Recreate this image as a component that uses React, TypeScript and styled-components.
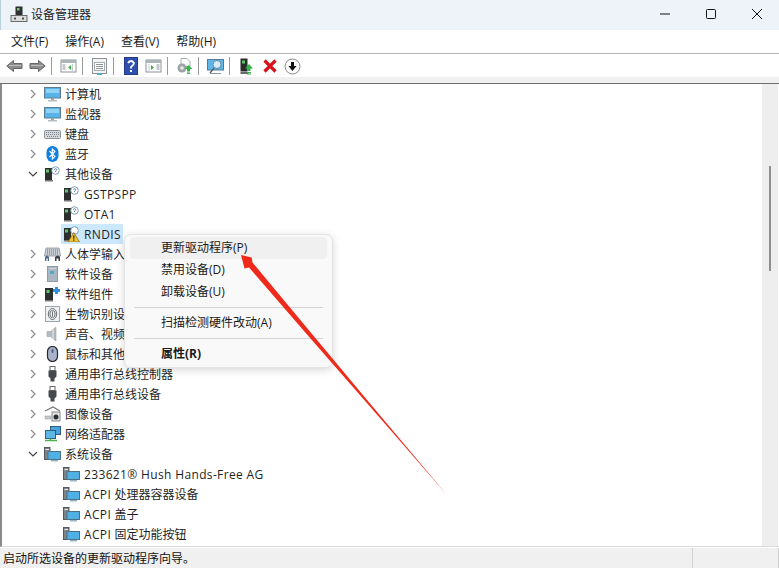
import styled, { createGlobalStyle } from 'styled-components';

const GlobalStyle = createGlobalStyle`
  html, body {
    margin: 0;
    padding: 0;
    background: #fff;
  }
  body {
    font-family: "Open Sans", "Noto Sans CJK SC", sans-serif;
    font-size: 12px;
    color: #1a1a1a;
  }
`;

type IconKind =
  | 'monitor' | 'keyboard' | 'bluetooth' | 'unknown' | 'warn' | 'hid' | 'box'
  | 'component' | 'finger' | 'speaker' | 'mouse' | 'usb' | 'camera' | 'network' | 'system';

function TreeIcon({ kind }: { kind: IconKind }) {
  switch (kind) {
    case 'monitor':
      return (
        <svg width="17" height="16" viewBox="0 0 17 16">
          <rect x="0.5" y="1.5" width="16" height="10.5" fill="#58b4e8" stroke="#5a7d96" />
          <rect x="2" y="3" width="13" height="4" fill="#8ed2f5" />
          <rect x="7" y="12" width="3" height="2" fill="#9aa5ad" />
          <rect x="4" y="14" width="9" height="1.5" fill="#b5bdc3" />
        </svg>
      );
    case 'keyboard':
      return (
        <svg width="17" height="16" viewBox="0 0 17 16">
          <rect x="0.5" y="4.5" width="16" height="8" rx="1" fill="#d4d8dc" stroke="#8b9299" />
          <path d="M2 6.5h13M2 8.5h13M3 10.5h11" stroke="#7f868d" strokeWidth="1" strokeDasharray="1 1" />
        </svg>
      );
    case 'bluetooth':
      return (
        <svg width="17" height="16" viewBox="0 0 17 16">
          <rect x="2.5" y="0" width="12" height="16" rx="6" fill="#0f7fe0" />
          <path d="M5.5 5 L11 10.5 L8.3 13 V3 L11 5.5 L5.5 11" fill="none" stroke="#fff" strokeWidth="1.1" />
        </svg>
      );
    case 'unknown':
      return (
        <svg width="17" height="16" viewBox="0 0 17 16">
          <rect x="1" y="2" width="7" height="12" fill="#2c2f2e" />
          <rect x="2" y="3.5" width="3" height="3" fill="#5fc66a" />
          <rect x="1" y="14" width="8" height="1.5" fill="#777" />
          <circle cx="11.5" cy="4.5" r="3.8" fill="#fff" stroke="#7d9db5" />
          <path d="M10.2 3.5 Q11.5 1.9 12.8 3.5 Q12.6 4.5 11.5 5.2 V6" fill="none" stroke="#5a7f9c" strokeWidth="1" />
        </svg>
      );
    case 'warn':
      return (
        <svg width="17" height="16" viewBox="0 0 17 16">
          <rect x="1" y="2" width="7" height="12" fill="#2c2f2e" />
          <rect x="2" y="3.5" width="3" height="3" fill="#5fc66a" />
          <rect x="1" y="14" width="8" height="1.5" fill="#777" />
          <circle cx="11.5" cy="4.5" r="3.8" fill="#fff" stroke="#7d9db5" />
          <path d="M10.8 6.5 L16.5 16 H5 Z" fill="#f4c430" stroke="#8a6a12" strokeWidth="0.8" />
          <path d="M10.8 9.5v3.2M10.8 13.6v1.2" stroke="#222" strokeWidth="1.2" />
        </svg>
      );
    case 'hid':
      return (
        <svg width="17" height="16" viewBox="0 0 17 16">
          <path d="M2 2h13l1.5 8H.5z" fill="#c9cfd5" stroke="#7b828a" strokeWidth="0.7" />
          <path d="M3 4h11M3 6h11M3 8h11" stroke="#6d757d" strokeDasharray="1 1" />
          <path d="M1 15 V11 Q3 8 5 11 V15 H3.7 V12.5 H2.3 V15 Z" fill="#4a6a92" />
          <path d="M11 15 V11 Q14 8 16 11 V15 H14.5 V12.5 H12.5 V15 Z" fill="#3a3f46" />
        </svg>
      );
    case 'box':
      return (
        <svg width="17" height="16" viewBox="0 0 17 16">
          <rect x="3.5" y="0.5" width="10" height="15" fill="#a9b7c0" stroke="#8d9aa3" />
          <rect x="6" y="5" width="4" height="3" fill="#53a7c8" />
          <rect x="5" y="2" width="7" height="1" fill="#cfd7dc" />
        </svg>
      );
    case 'component':
      return (
        <svg width="17" height="16" viewBox="0 0 17 16">
          <rect x="1" y="2" width="8" height="12" fill="#2b2f2e" />
          <rect x="2.5" y="4" width="3" height="3" fill="#5fc66a" />
          <rect x="1" y="14" width="8" height="1.5" fill="#777" />
          <path d="M11 1h3v2h2v3h-2v2h-3V6H9V3h2z" fill="#2f8fe0" />
        </svg>
      );
    case 'finger':
      return (
        <svg width="17" height="16" viewBox="0 0 17 16">
          <rect x="1.5" y="0.5" width="14" height="15" fill="#eef2f4" stroke="#9aa6ae" />
          <ellipse cx="8.5" cy="8" rx="4.2" ry="5.5" fill="none" stroke="#6d7276" />
          <ellipse cx="8.5" cy="8" rx="2.6" ry="3.7" fill="none" stroke="#6d7276" />
          <path d="M8.5 5.5v5" stroke="#6d7276" />
        </svg>
      );
    case 'speaker':
      return (
        <svg width="17" height="16" viewBox="0 0 17 16">
          <path d="M3 5.5h3.5L12 1v14L6.5 10.5H3z" fill="#b3babf" stroke="#9aa1a6" strokeWidth="0.6" />
          <path d="M9 3v10" stroke="#d7dbde" strokeWidth="1.5" />
        </svg>
      );
    case 'mouse':
      return (
        <svg width="17" height="16" viewBox="0 0 17 16">
          <rect x="3.5" y="0.5" width="10" height="15" rx="5" fill="#a8b3c9" stroke="#24272c" strokeWidth="1.2" />
          <rect x="7.5" y="3" width="2" height="4" rx="1" fill="#4c5f86" />
        </svg>
      );
    case 'usb':
      return (
        <svg width="17" height="16" viewBox="0 0 17 16">
          <rect x="6" y="0.5" width="5" height="4" fill="#fff" stroke="#666" />
          <path d="M4.5 4.5h8v6l-2 2v3h-4v-3l-2-2z" fill="#45494d" />
        </svg>
      );
    case 'camera':
      return (
        <svg width="17" height="16" viewBox="0 0 17 16">
          <path d="M1 5 L9 1 L16 5" fill="none" stroke="#777" strokeWidth="1.2" />
          <rect x="8" y="6" width="8" height="9" fill="#dfe3e6" stroke="#888" />
          <circle cx="12" cy="11" r="2.5" fill="#2c2f32" />
          <rect x="1" y="10" width="6" height="3" fill="#c4c9cc" stroke="#999" strokeWidth="0.5" />
        </svg>
      );
    case 'network':
      return (
        <svg width="17" height="16" viewBox="0 0 17 16">
          <rect x="6.5" y="0.5" width="10" height="8" fill="#4aa3df" stroke="#31607f" />
          <rect x="1.5" y="4.5" width="10" height="8" fill="#5db7e8" stroke="#31607f" />
          <path d="M6.5 12.5v1.5M1 14.5h12" stroke="#4db04f" strokeWidth="1.5" />
        </svg>
      );
    default:
      return (
        <svg width="17" height="16" viewBox="0 0 17 16">
          <rect x="0.5" y="1.5" width="5.5" height="12" fill="#7e8388" stroke="#55595d" />
          <rect x="1.5" y="3" width="3.5" height="1" fill="#e8e8e8" />
          <rect x="4" y="5.5" width="12.5" height="8" fill="#4fb0e6" stroke="#4a7186" />
          <rect x="7" y="14" width="7" height="1.5" fill="#9ab3c2" />
        </svg>
      );
  }
}

type TreeNode = { label: string; icon: IconKind; level: 0 | 1; open?: boolean; selected?: boolean };

const treeNodes: TreeNode[] = [
  { label: '计算机', icon: 'monitor', level: 0 },
  { label: '监视器', icon: 'monitor', level: 0 },
  { label: '键盘', icon: 'keyboard', level: 0 },
  { label: '蓝牙', icon: 'bluetooth', level: 0 },
  { label: '其他设备', icon: 'unknown', level: 0, open: true },
  { label: 'GSTPSPP', icon: 'unknown', level: 1 },
  { label: 'OTA1', icon: 'unknown', level: 1 },
  { label: 'RNDIS', icon: 'warn', level: 1, selected: true },
  { label: '人体学输入设备', icon: 'hid', level: 0 },
  { label: '软件设备', icon: 'box', level: 0 },
  { label: '软件组件', icon: 'component', level: 0 },
  { label: '生物识别设备', icon: 'finger', level: 0 },
  { label: '声音、视频和游戏控制器', icon: 'speaker', level: 0 },
  { label: '鼠标和其他指针设备', icon: 'mouse', level: 0 },
  { label: '通用串行总线控制器', icon: 'usb', level: 0 },
  { label: '通用串行总线设备', icon: 'usb', level: 0 },
  { label: '图像设备', icon: 'camera', level: 0 },
  { label: '网络适配器', icon: 'network', level: 0 },
  { label: '系统设备', icon: 'system', level: 0, open: true },
  { label: '233621® Hush Hands-Free AG', icon: 'system', level: 1 },
  { label: 'ACPI 处理器容器设备', icon: 'system', level: 1 },
  { label: 'ACPI 盖子', icon: 'system', level: 1 },
  { label: 'ACPI 固定功能按钮', icon: 'system', level: 1 },
];

const menuLabels = ['文件(F)', '操作(A)', '查看(V)', '帮助(H)'];

function ToolIcon({ name }: { name: string }) {
  switch (name) {
    case 'back':
      return (
        <svg width="17" height="16" viewBox="0 0 17 16">
          <path d="M.8 8 7.5 2.5V5.5h8.5v5H7.5v3z" fill="#8c8c8c" stroke="#666" />
          <path d="M3 7.5h12" stroke="#bdbdbd" />
        </svg>
      );
    case 'forward':
      return (
        <svg width="17" height="16" viewBox="0 0 17 16">
          <path d="M16.2 8 9.5 2.5V5.5H1v5h8.5v3z" fill="#8c8c8c" stroke="#666" />
          <path d="M2 7.5h12" stroke="#bdbdbd" />
        </svg>
      );
    case 'panelLeft':
      return (
        <svg width="17" height="16" viewBox="0 0 17 16">
          <rect x="1" y="2" width="15" height="12" fill="#fff" stroke="#8d9498" />
          <rect x="1" y="2" width="15" height="3" fill="#aeb5b9" />
          <path d="M2.5 7h3M2.5 9h3M2.5 11h3" stroke="#8d9498" />
          <path d="M11 7 8 9.5l3 2.5z" fill="#3fae49" />
          <path d="M12.5 6v7" stroke="#c6cbce" />
        </svg>
      );
    case 'panelRight':
      return (
        <svg width="17" height="16" viewBox="0 0 17 16">
          <rect x="1" y="2" width="15" height="12" fill="#fff" stroke="#8d9498" />
          <rect x="1" y="2" width="15" height="3" fill="#aeb5b9" />
          <path d="M11.5 7h3M11.5 9h3M11.5 11h3" stroke="#8d9498" />
          <path d="M6 7l3 2.5L6 12z" fill="#3fae49" />
          <path d="M4 6v7" stroke="#c6cbce" />
        </svg>
      );
    case 'sheet':
      return (
        <svg width="17" height="17" viewBox="0 0 17 17">
          <rect x="1.5" y="0.5" width="14" height="15" fill="#f3f4f4" stroke="#8d9498" />
          <rect x="3.5" y="4.5" width="10" height="8" fill="#fff" stroke="#a4abaf" />
          <path d="M5 6.5h7M5 8.5h7M5 10.5h7" stroke="#8d9498" />
          <rect x="6" y="15" width="5" height="2" fill="#58a6d6" />
        </svg>
      );
    case 'help':
      return (
        <svg width="14" height="18" viewBox="0 0 14 18">
          <rect x="0.5" y="0.5" width="13" height="17" fill="#2f4fae" stroke="#27388a" />
          <path d="M4 6 Q7 2 10 6 Q10 8 7 10 V11.5" fill="none" stroke="#fff" strokeWidth="1.8" />
          <rect x="6" y="13" width="2" height="2" fill="#fff" />
        </svg>
      );
    case 'scan':
      return (
        <svg width="17" height="17" viewBox="0 0 17 17">
          <path d="M5 .5h6l3 3v5H5z" fill="#fafafa" stroke="#a9aeb1" />
          <circle cx="6" cy="10" r="4.5" fill="#9ea3a6" />
          <circle cx="6" cy="10" r="1.8" fill="#eee" />
          <path d="M12.5 7 8.5 11h2.5v2h3v-2h2.5z" fill="#35b44a" />
          <path d="M11 14h3M11 15.5h3" stroke="#35b44a" />
        </svg>
      );
    case 'monitorScan':
      return (
        <svg width="17" height="17" viewBox="0 0 17 17">
          <rect x="0.5" y="1.5" width="16" height="10.5" fill="#5fb5e8" stroke="#4d7d9b" />
          <circle cx="10" cy="6.5" r="4" fill="#d3ecf9" stroke="#6a8ba0" />
          <path d="M7 10l-4 5" stroke="#5c6367" strokeWidth="1.5" />
          <path d="M3 15.5h11" stroke="#8f979c" />
        </svg>
      );
    case 'addDriver':
      return (
        <svg width="13" height="17" viewBox="0 0 13 17">
          <rect x="0.5" y="0.5" width="7" height="13" fill="#282c2b" />
          <rect x="2" y="2.5" width="3" height="3" fill="#5fc66a" />
          <rect x="0.5" y="14" width="8" height="2" fill="#686868" />
          <path d="M9 6 5 10.5h2.5V13h3v-2.5H13z" fill="#35b44a" />
          <path d="M7 14.5h4M7 16h4" stroke="#35b44a" />
        </svg>
      );
    case 'remove':
      return (
        <svg width="14" height="14" viewBox="0 0 14 14">
          <path d="M1.5 1.5l11 11M12.5 1.5l-11 11" stroke="#d7141a" strokeWidth="3.2" />
        </svg>
      );
    default:
      return (
        <svg width="17" height="17" viewBox="0 0 17 17">
          <circle cx="8.5" cy="8.5" r="7.5" fill="#fafafa" stroke="#8a8a8a" />
          <path d="M8.5 13 4.5 8H7V4h3v4h2.5z" fill="#111" />
        </svg>
      );
  }
}

const toolbarGroups = [
  ['back', 'forward'],
  ['panelLeft'],
  ['sheet'],
  ['help', 'panelRight'],
  ['scan'],
  ['monitorScan'],
  ['addDriver', 'remove', 'download'],
];

// latin runs are spaced a little wider than the CJK text around them
function renderLabel(label: string) {
  return label.split(/([\x20-\x7e®]+)/).map((part, index) =>
    index % 2 === 1 ? <LatinRun key={index}>{part}</LatinRun> : part,
  );
}

function App() {
  return (
    <>
      <GlobalStyle />
      <Window>
        <TitleBar>
          <AppIcon>
            <svg width="18" height="16" viewBox="0 0 18 16">
              <rect x="5.5" y="0.5" width="7" height="9" fill="#2e3130" />
              <rect x="7" y="2" width="2.5" height="2.5" fill="#78c67d" />
              <rect x="1" y="9.5" width="16" height="6" fill="#dcdcdc" stroke="#6b6b6b" />
              <rect x="4" y="11.5" width="2" height="2" fill="#555" />
              <rect x="12" y="11.5" width="2" height="2" fill="#555" />
            </svg>
          </AppIcon>
          <TitleText>设备管理器</TitleText>
          <WindowControls>
            <ControlButton aria-label="最小化">
              <svg width="10" height="10" viewBox="0 0 10 10">
                <path d="M0 5h10" stroke="#111" strokeWidth="1" />
              </svg>
            </ControlButton>
            <ControlButton aria-label="最大化">
              <svg width="10" height="10" viewBox="0 0 10 10">
                <rect x="0.5" y="0.5" width="9" height="9" rx="1" fill="none" stroke="#111" />
              </svg>
            </ControlButton>
            <ControlButton aria-label="关闭">
              <svg width="10" height="10" viewBox="0 0 10 10">
                <path d="M0 0l10 10M10 0 0 10" stroke="#111" strokeWidth="1" />
              </svg>
            </ControlButton>
          </WindowControls>
        </TitleBar>

        <MenuBar>
          {menuLabels.map((label) => (
            <MenuLabel key={label}>{label}</MenuLabel>
          ))}
        </MenuBar>

        <ToolBar>
          {toolbarGroups.map((group, index) => (
            <ToolGroup key={group[0]}>
              {index > 0 && <ToolSeparator />}
              {group.map((name) => (
                <ToolButton key={name}>
                  <ToolIcon name={name} />
                </ToolButton>
              ))}
            </ToolGroup>
          ))}
        </ToolBar>
        <ToolStrip />

        <Content>
          <Tree>
            {treeNodes.map((node) => (
              <TreeRow key={node.label} $level={node.level}>
                {node.level === 0 && (
                  <Chevron>
                    {node.open ? (
                      <svg width="10" height="10" viewBox="0 0 10 10">
                        <path d="M1 3l4 4 4-4" fill="none" stroke="#444" strokeWidth="1.2" />
                      </svg>
                    ) : (
                      <svg width="10" height="10" viewBox="0 0 10 10">
                        <path d="M3 1l4 4-4 4" fill="none" stroke="#8a8a8a" strokeWidth="1.2" />
                      </svg>
                    )}
                  </Chevron>
                )}
                <RowBody $selected={node.selected}>
                  <TreeIcon kind={node.icon} />
                  <RowLabel>{renderLabel(node.label)}</RowLabel>
                </RowBody>
              </TreeRow>
            ))}
          </Tree>
          <ScrollTrack>
            <ScrollThumb />
          </ScrollTrack>
        </Content>

        <StatusBar>
          <StatusText>启动所选设备的更新驱动程序向导。</StatusText>
          <StatusCell />
          <StatusCell />
        </StatusBar>
      </Window>

      <ContextMenu>
        <MenuItem $active>更新驱动程序(P)</MenuItem>
        <MenuItem>禁用设备(D)</MenuItem>
        <MenuItem>卸载设备(U)</MenuItem>
        <MenuDivider />
        <MenuItem>扫描检测硬件改动(A)</MenuItem>
        <MenuDivider />
        <MenuItem $bold>属性(R)</MenuItem>
      </ContextMenu>

      <ArrowOverlay width="779" height="568" viewBox="0 0 779 568">
        <path
          d="M241 255 L251.7 257.5 L252.5 262.5 L312 334 L369.8 403.2 L447 495 L368.2 404.4 L309 336.7 L249 267.5 L244.5 268.5 Z"
          fill="#f02a1a"
        />
      </ArrowOverlay>
    </>
  );
}

const Window = styled.div`
  position: relative;
  display: flex;
  flex-direction: column;
  width: 779px;
  height: 568px;
  overflow: hidden;
  background: #fff;
`;

const TitleBar = styled.div`
  display: flex;
  align-items: center;
  flex: 0 0 30px;
  padding: 0 0 2px 9px;
  background: #eef3f9;
  border-left: 1px solid #b9cfdc;
  box-sizing: border-box;
`;

const AppIcon = styled.span`
  display: flex;
  width: 21px;
`;

const TitleText = styled.span`
  font-size: 12px;
  color: #222;
`;

const WindowControls = styled.div`
  display: flex;
  margin-left: auto;
  margin-right: -1px;
`;

const ControlButton = styled.span`
  display: flex;
  align-items: center;
  justify-content: center;
  width: 46px;
  height: 28px;
`;

const MenuBar = styled.div`
  display: flex;
  align-items: center;
  flex: 0 0 21px;
  padding: 0 0 2px 11px;
  gap: 17px;
  border-bottom: 1px solid #b4b4b4;
`;

const MenuLabel = styled.span`
  font-size: 12px;
  white-space: nowrap;
`;

const ToolBar = styled.div`
  display: flex;
  align-items: center;
  flex: 0 0 23px;
  padding: 1px 0 0 3px;
  box-sizing: border-box;
`;

const ToolGroup = styled.div`
  display: flex;
  align-items: center;
`;

const ToolSeparator = styled.span`
  width: 1px;
  height: 18px;
  margin: 0 5px 0 2px;
  background: #9a9a9a;
`;

const ToolButton = styled.span`
  display: flex;
  align-items: center;
  justify-content: center;
  width: 23px;
  height: 22px;
`;

const ToolStrip = styled.div`
  flex: 0 0 7px;
  background: #f0f0f0;
  border-bottom: 1px solid #6e6e6e;
  box-sizing: border-box;
`;

const Content = styled.div`
  display: flex;
  flex: 1;
  min-height: 0;
  border-left: 2px solid #8a8a8a;
  border-bottom: 1px solid #dcdcdc;
`;

const Tree = styled.div`
  flex: 1;
  min-width: 0;
  overflow: hidden;
`;

const TreeRow = styled.div<{ $level: number }>`
  display: flex;
  align-items: center;
  height: 20px;
  padding-left: ${(p) => (p.$level === 0 ? 23 : 59)}px;
`;

const Chevron = styled.span`
  display: flex;
  align-items: center;
  justify-content: center;
  flex: 0 0 15px;
  margin-right: 2px;
`;

const RowBody = styled.div<{ $selected?: boolean }>`
  display: flex;
  align-items: center;
  height: 20px;
  padding: 0 2px;
  background: ${(p) => (p.$selected ? '#cce8ff' : 'transparent')};
`;

const RowLabel = styled.span`
  margin-left: 4px;
  font-size: 12px;
  white-space: nowrap;
  color: #1f1f1f;
`;

const LatinRun = styled.span`
  letter-spacing: 0.35px;
`;

const ScrollTrack = styled.div`
  position: relative;
  flex: 0 0 16px;
  margin-right: 1px;
  background: #eeeeee;
`;

const ScrollThumb = styled.div`
  width: 2px;
  height: 105px;
  margin: 82px 0 0 7px;
  background: #8e8e8e;
`;

const StatusBar = styled.div`
  display: flex;
  align-items: center;
  flex: 0 0 21px;
  background: #f0f0f0;
  border-top: 1px solid #fff;
  box-sizing: border-box;
`;

const StatusText = styled.span`
  flex: 0 0 692px;
  padding-left: 3px;
  box-sizing: border-box;
  font-size: 12px;
  color: #111;
`;

const StatusCell = styled.span`
  flex: 0 0 85px;
  height: 100%;
  border-left: 1px solid #d0d0d0;
`;

const ContextMenu = styled.div`
  position: absolute;
  left: 124px;
  top: 234px;
  display: flex;
  flex-direction: column;
  width: 209px;
  padding: 2px 5px;
  box-sizing: border-box;
  background: #f9f9f9;
  border: 1px solid #e3e3e3;
  border-radius: 7px;
  box-shadow: 0 2px 8px rgba(0, 0, 0, 0.16);
`;

const MenuItem = styled.div<{ $active?: boolean; $bold?: boolean }>`
  display: flex;
  align-items: center;
  height: 22px;
  padding: 0 0 2px 31px;
  box-sizing: border-box;
  border-radius: 4px;
  font-size: 12px;
  font-weight: ${(p) => (p.$bold ? 700 : 400)};
  color: #1a1a1a;
  background: ${(p) => (p.$active ? '#f0f0f0' : 'transparent')};
`;

const MenuDivider = styled.div`
  height: 1px;
  margin: 4px 4px;
  background: #d5d5d5;
`;

const ArrowOverlay = styled.svg`
  position: absolute;
  left: 0;
  top: 0;
  pointer-events: none;
`;

export default App;
